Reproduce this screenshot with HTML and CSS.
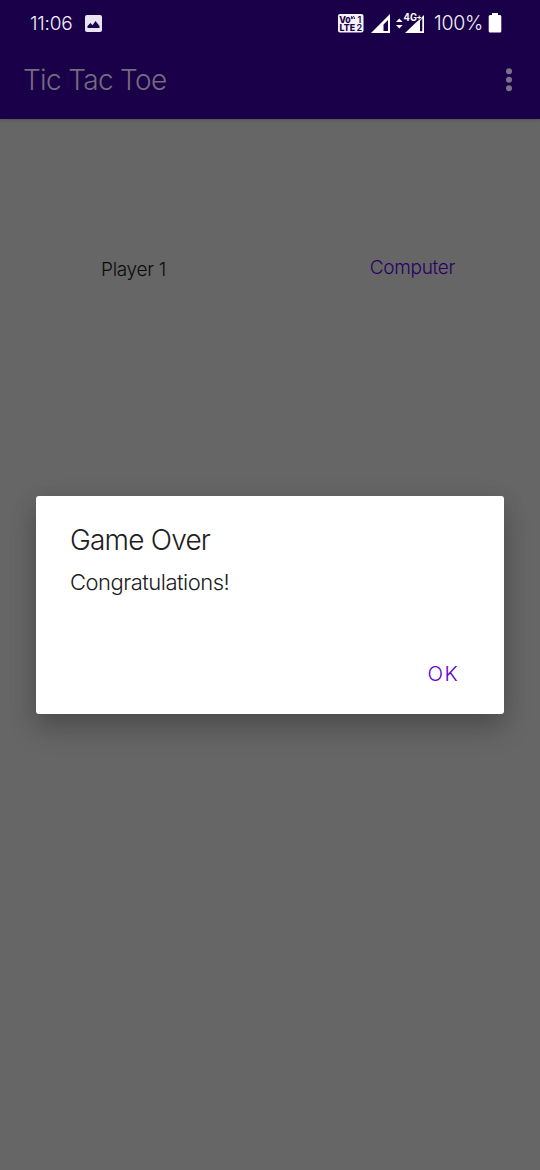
FILE: index.html
```html
<!DOCTYPE html>
<html lang="en">
<head>
<meta charset="utf-8">
<title>Tic Tac Toe</title>
<link rel="stylesheet" href="styles.css">
</head>
<body>
<div class="screen">
  <header class="top">
    <div class="status">
      <span class="clock">11:06</span>
      <svg class="photo" width="17" height="17" viewBox="0 0 17 17"><rect width="17" height="17" rx="2" fill="#e9e4f2"/><path d="M2.5 13V11L5.5 8L7.5 10.2L10.5 6L14.5 11V13Z" fill="#190048"/></svg>
      <svg class="volte" width="26" height="19" viewBox="0 0 26 19"><rect width="25.5" height="18.5" rx="2" fill="#f4f1f8"/><g class="volte-text"><text x="1.2" y="8.6" textLength="11.5" lengthAdjust="spacingAndGlyphs">Vo</text><text x="1.5" y="17.2" textLength="15.5" lengthAdjust="spacingAndGlyphs">LTE</text><text class="sim" x="19.5" y="8.6">1</text><text class="sim" x="18.5" y="17.2">2</text></g><path d="M13.4 5V2.5q1.5 0 1.5 2.5M16.5 5q0-2-1.2-3" fill="none" stroke="#190048" stroke-width=".9"/></svg>
      <svg class="signal" width="19" height="19" viewBox="0 0 19 19"><path fill-rule="evenodd" d="M19 0V19H0ZM17 6L12.5 10.5V17H17Z" fill="#fff"/></svg>
      <svg class="signal4g" width="29" height="21" viewBox="0 0 29 21"><path d="M0 9L3.3 5.5L6.6 9ZM0 12L3.3 15.5L6.6 12Z" fill="#fff"/><path fill-rule="evenodd" d="M28 2V20H9L20 9.5L24 6ZM26.3 5.5L24 8V18.3H26.3Z" fill="#fff"/><text class="net" x="7.5" y="8.4" textLength="13.5" lengthAdjust="spacingAndGlyphs" stroke="#190048" stroke-width="1.6" paint-order="stroke">4G</text><text class="plus" x="20.5" y="6.5" stroke="#190048" stroke-width="1" paint-order="stroke">+</text></svg>
      <span class="percent">100%</span>
      <svg class="battery" width="14" height="20" viewBox="0 0 14 20"><path d="M4 0H10V2H12Q13.3 2 13.3 3.5V18Q13.3 19.5 12 19.5H2Q.7 19.5 .7 18V3.5Q.7 2 2 2H4Z" fill="#fff"/></svg>
    </div>
    <div class="appbar">
      <h1 class="title">Tic Tac Toe</h1>
      <svg class="more" width="6" height="24" viewBox="0 0 6 24"><g fill="#7b7189"><circle cx="3" cy="3.2" r="3"/><circle cx="3" cy="11.7" r="3"/><circle cx="3" cy="20.2" r="3"/></g></svg>
    </div>
  </header>
  <main class="board">
    <div class="players">
      <span class="player">Player 1</span>
      <span class="computer">Computer</span>
    </div>
    <section class="dialog" role="dialog">
      <h2 class="heading">Game Over</h2>
      <p class="message">Congratulations!</p>
      <button class="ok">OK</button>
    </section>
  </main>
</div>
</body>
</html>
```

FILE: styles.css
```css
* { box-sizing: border-box; margin: 0; padding: 0; }
body { margin: 0; font-family: Inter, "Liberation Sans", sans-serif; font-weight: 300; }
.screen { width: 540px; height: 1170px; background: #666; display: flex; flex-direction: column; overflow: hidden; }
.top { height: 119px; background: #190048; box-shadow: 0 1px 3px rgba(0,0,0,.2); }
.status { height: 40px; padding: 6px 37px 0 30px; display: flex; align-items: center; color: #f4f1f8; font-size: 19px; line-height: 34px; }
.status svg { flex: none; overflow: visible; }
.clock { width: 55px; padding-top: 1px; letter-spacing: -.2px; white-space: nowrap; }
.volte { margin-left: 236px; }
.volte-text { font: 800 9.5px Inter, sans-serif; fill: #190048; }
.sim { font-weight: 600; font-size: 9px; }
.signal { margin-left: 7px; }
.signal4g { margin-left: 6px; }
.net { font: 700 10px Inter, sans-serif; fill: #fff; }
.plus { font: 700 8px Inter, sans-serif; fill: #fff; }
.percent { margin-left: 9px; width: 54px; font-size: 19.5px; letter-spacing: -.25px; white-space: nowrap; }
.appbar { height: 79px; padding: 0 28px 0 23px; display: flex; align-items: center; justify-content: space-between; }
.title { color: #756b7f; font-size: 28px; font-weight: 300; line-height: 40px; letter-spacing: -.68px; }
.board { flex: 1; display: flex; flex-direction: column; }
.players { padding: 136px 85px 0 101px; height: 377px; display: flex; justify-content: space-between; align-items: flex-start; font-size: 19px; line-height: 26px; letter-spacing: -.3px; }
.player { color: #0c0c0c; margin-top: 2px; }
.computer { color: #270062; }
.dialog { width: 468px; height: 217.5px; margin: 0 36px; padding: 26px 34px 0; display: flex; flex-direction: column; align-items: flex-start; background: #fff; border-radius: 3px; color: #202020; box-shadow: 0 16px 28px rgba(0,0,0,.18), 0 4px 24px rgba(0,0,0,.12); }
.heading { font-size: 28px; line-height: 36px; font-weight: 300; letter-spacing: -.8px; }
.message { margin-top: 9px; font-size: 22px; line-height: 30px; letter-spacing: -.5px; }
.ok { margin: 62px 11px 0 auto; border: 0; background: none; color: #6200d0; font: 300 20.5px/30px Inter, sans-serif; letter-spacing: 1.3px; }
```
